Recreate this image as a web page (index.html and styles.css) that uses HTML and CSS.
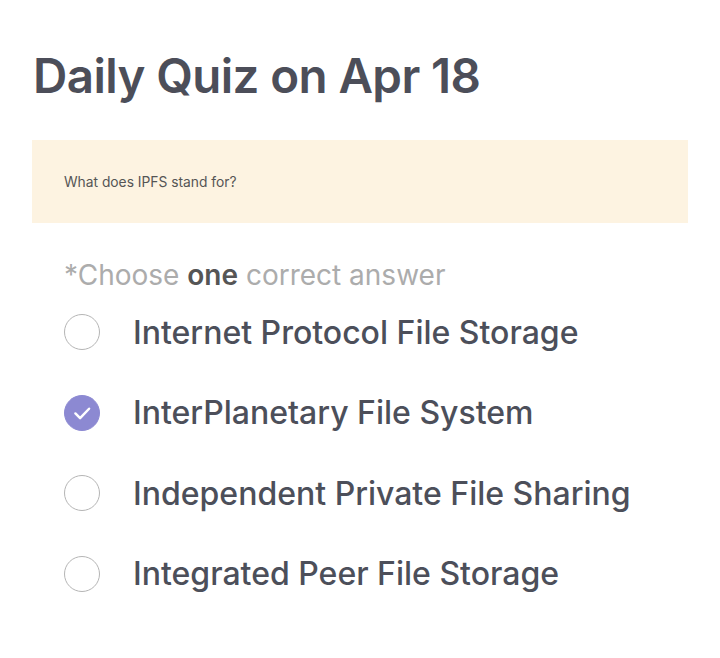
FILE: index.html
```html
<!DOCTYPE html>
<html>
<head>
<meta charset="utf-8">
<link rel="stylesheet" href="styles.css">
</head>
<body>
<main class="quiz">
  <h1 class="title">Daily Quiz on Apr 18</h1>
  <div class="question">What does IPFS stand for?</div>
  <p class="hint">*Choose <b>one</b> correct answer</p>
  <ul class="options">
    <li class="option"><span class="radio"></span><span class="label">Internet Protocol File Storage</span></li>
    <li class="option"><span class="radio checked"><svg viewBox="0 0 36 36" width="36" height="36"><path d="M11 18.5 L16 23.5 L25.5 13.5" fill="none" stroke="#fff" stroke-width="2.6" stroke-linecap="round" stroke-linejoin="round"/></svg></span><span class="label">InterPlanetary File System</span></li>
    <li class="option"><span class="radio"></span><span class="label">Independent Private File Sharing</span></li>
    <li class="option"><span class="radio"></span><span class="label">Integrated Peer File Storage</span></li>
  </ul>
</main>
</body>
</html>
```
FILE: styles.css
```css
html, body { margin: 0; padding: 0; background: #fff; }
body { font-family: Inter, "Noto Sans", sans-serif; color: #4c4f5a; }
.quiz { padding: 44px 32px 0 32px; }
.title { margin: 0 0 0 1px; font-size: 47.5px; font-weight: 600; line-height: 64px; letter-spacing: -0.6px; color: #4c4e59; }
.question { margin-top: 32px; height: 83px; background: #fdf3e1; display: flex; align-items: center; padding-left: 32px; font-size: 13.8px; color: #555; }
.hint { margin: 36px 0 0 32px; font-size: 28px; line-height: 32px; color: #acacac; }
.hint b { color: #555; font-weight: 600; }
.options { list-style: none; margin: 1px 0 0 32px; padding: 0; }
.option { display: flex; align-items: center; height: 80.5px; }
.radio { width: 34px; height: 34px; border: 1px solid #b5b5b5; border-radius: 50%; flex: none; display: flex; align-items: center; justify-content: center; }
.radio.checked { background: #8c89d2; border-color: #8c89d2; }
.radio svg { width: 36px; height: 36px; }
.label { margin-left: 33px; font-size: 32px; font-weight: 500; color: #4c4f5a; }
```
